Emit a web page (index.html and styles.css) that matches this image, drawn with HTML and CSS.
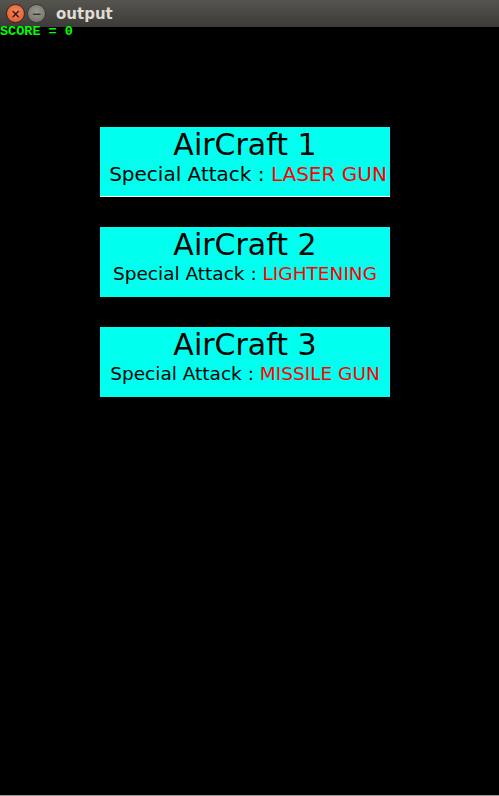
FILE: index.html
```html
<!DOCTYPE html>
<html>
<head>
<meta charset="utf-8">
<link rel="stylesheet" href="styles.css">
</head>
<body>
<div class="window">
  <div class="titlebar">
    <span class="btn close">×</span>
    <span class="btn min">−</span>
    <span class="title">output</span>
  </div>
  <div class="canvas">
    <div class="score">SCORE = 0</div>
    <div class="cards">
      <div class="card first">
        <div class="name">AirCraft 1</div>
        <div class="attack big">Special Attack : <span class="red">LASER GUN</span></div>
      </div>
      <div class="card">
        <div class="name">AirCraft 2</div>
        <div class="attack">Special Attack : <span class="red">LIGHTENING</span></div>
      </div>
      <div class="card">
        <div class="name">AirCraft 3</div>
        <div class="attack">Special Attack : <span class="red">MISSILE GUN</span></div>
      </div>
    </div>
  </div>
</div>
</body>
</html>
```
FILE: styles.css
```css
html, body {
  margin: 0;
  padding: 0;
  background: #000;
}
.window {
  width: 499px;
  height: 796px;
  display: flex;
  flex-direction: column;
  overflow: hidden;
}
.titlebar {
  height: 27px;
  flex: none;
  background: linear-gradient(#55544f, #3c3b37);
  display: flex;
  align-items: center;
  padding-left: 6px;
  box-sizing: border-box;
  font-family: "DejaVu Sans", sans-serif;
}
.btn {
  width: 17px;
  height: 17px;
  border-radius: 50%;
  display: flex;
  align-items: center;
  justify-content: center;
  font-size: 12px;
  line-height: 1;
  font-weight: bold;
  color: #3a1a10;
  margin-right: 2px;
}
.close {
  background: radial-gradient(circle at 50% 40%, #f58a5e, #e0522a);
  border: 1px solid #3a2a22;
}
.min {
  background: radial-gradient(circle at 50% 40%, #9a9890, #6e6c66);
  border: 1px solid #3a3936;
  color: #3a3936;
}
.title {
  color: #dfdbd2;
  font-weight: bold;
  font-size: 15px;
  margin-left: 8px;
}
.canvas {
  flex: 1;
  background: #000;
  border-bottom: 1px solid #9a9a9a;
  position: relative;
}
.score {
  font-family: "Liberation Mono", monospace;
  font-weight: bold;
  font-size: 13.5px;
  line-height: 9px;
  color: #00ff00;
  height: 9px;
}
.cards {
  margin-top: 91px;
  padding-left: 100px;
  display: flex;
  flex-direction: column;
  gap: 30px;
}
.card {
  width: 290px;
  height: 70px;
  box-sizing: border-box;
  background: #00ffee;
  font-family: "DejaVu Sans", sans-serif;
  color: #000;
  text-align: center;
  white-space: nowrap;
  overflow: hidden;
  padding-top: 1px;
}
.card.first {
  border-bottom: 1px solid #fff;
}
.name {
  font-size: 30px;
  line-height: 34px;
}
.attack {
  font-size: 18.5px;
  line-height: 24px;
}
.attack.big {
  font-size: 20px;
  padding-left: 6px;
}
.red {
  color: #ff0000;
}
```
